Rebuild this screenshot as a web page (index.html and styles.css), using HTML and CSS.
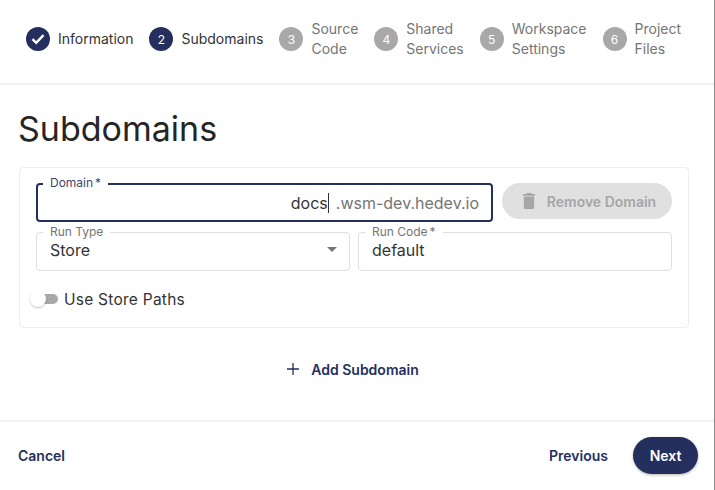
FILE: index.html
```html
<!DOCTYPE html>
<html lang="en">
<head>
  <meta charset="UTF-8">
  <meta name="viewport" content="width=device-width, initial-scale=1.0">
  <title>Subdomains</title>
  <link rel="stylesheet" href="styles.css">
</head>
<body>
  <div class="dialog">
    <!-- Wizard steps -->
    <header class="stepper">
      <div class="step">
        <span class="step-icon active">
          <svg width="14" height="12" viewBox="0 0 14 12"><path d="M1.5 6.2 5.2 9.8 12.500 2.200" fill="none" stroke="#fff" stroke-width="2.400"/></svg>
        </span>
        <span class="step-label done">Information</span>
      </div>
      <div class="step">
        <span class="step-icon active">2</span>
        <span class="step-label done">Subdomains</span>
      </div>
      <div class="step">
        <span class="step-icon">3</span>
        <span class="step-label">Source<br>Code</span>
      </div>
      <div class="step">
        <span class="step-icon">4</span>
        <span class="step-label">Shared<br>Services</span>
      </div>
      <div class="step">
        <span class="step-icon">5</span>
        <span class="step-label">Workspace<br>Settings</span>
      </div>
      <div class="step">
        <span class="step-icon">6</span>
        <span class="step-label">Project<br>Files</span>
      </div>
    </header>

    <main class="content">
      <h1 class="title">Subdomains</h1>

      <section class="card">
        <div class="domain-row">
          <div class="field focused">
            <label class="field-label">Domain<span class="required">*</span></label>
            <span class="domain-value">docs</span>
            <span class="caret"></span>
            <span class="domain-suffix">.wsm-dev.hedev.io</span>
          </div>
          <button class="remove-btn" type="button">
            <svg width="12" height="16" viewBox="0 0 14 18" preserveAspectRatio="none"><path d="M1 16c0 1.100.9 2 2 2h8c1.100 0 2-.9 2-2V4H1v12zM14 1h-3.500l-1-1h-5l-1 1H0v2h14V1z" fill="#a6a6a6"/></svg>
            Remove Domain
          </button>
        </div>

        <div class="run-row">
          <div class="field">
            <label class="field-label">Run Type</label>
            <span class="field-value">Store</span>
            <svg class="select-arrow" width="10" height="5" viewBox="0 0 10 5"><path d="M0 0h10L5 5z" fill="#757575"/></svg>
          </div>
          <div class="field">
            <label class="field-label">Run Code<span class="required">*</span></label>
            <span class="field-value">default</span>
          </div>
        </div>

        <div class="switch-row">
          <span class="switch"><span class="switch-thumb"></span></span>
          <span class="switch-label">Use Store Paths</span>
        </div>
      </section>

      <div class="add-row">
        <button class="text-btn add-btn" type="button">
          <svg width="12" height="12" viewBox="0 0 12 12"><path d="M6 0v12M0 6h12" stroke="#252f5e" stroke-width="1.300" fill="none"/></svg>
          Add Subdomain
        </button>
      </div>
    </main>

    <footer class="actions">
      <button class="text-btn" type="button">Cancel</button>
      <div class="actions-right">
        <button class="text-btn" type="button">Previous</button>
        <button class="next-btn" type="button">Next</button>
      </div>
    </footer>
  </div>
</body>
</html>
```

FILE: styles.css
```css
/* Page */
body {
  margin: 0;
  background: #fff;
  font-family: Inter, "Liberation Sans", sans-serif;
  color: #212121;
}

button {
  font-family: inherit;
  border: none;
  background: none;
  padding: 0;
}

.dialog {
  width: 714px;
  height: 490px;
  border-right: 1px solid #8a8a8a;
  display: flex;
  flex-direction: column;
}

/* Stepper */
.stepper {
  display: flex;
  gap: 16px;
  height: 78px;
  padding: 0 0 5px 26px;
  align-items: center;
  border-bottom: 2px solid #f1f1f1;
}

.step {
  display: flex;
  align-items: center;
  gap: 8px;
}

.step-icon {
  width: 24px;
  height: 24px;
  border-radius: 50%;
  background: #a8a8a8;
  color: #fff;
  font-size: 12px;
  display: flex;
  align-items: center;
  justify-content: center;
}

.step-icon.active {
  background: #252f5e;
}

.step-label {
  font-size: 14px;
  line-height: 20px;
  color: #757575;
}

.step-label.done {
  color: #333;
}

/* Main area */
.content {
  flex: 1;
  padding: 0 25px 0 19px;
}

.title {
  margin: 23px 0 17px -1px;
  font-size: 34px;
  line-height: 42px;
  font-weight: 400;
  color: #252525;
}

.card {
  border: 1px solid #eeeeee;
  border-radius: 4px;
  padding: 15px 16px 0 16px;
  height: 161px;
  box-sizing: border-box;
}

.domain-row {
  display: flex;
  gap: 9px;
  align-items: flex-start;
}

.field {
  position: relative;
  display: flex;
  align-items: center;
  box-sizing: border-box;
  border: 1px solid #e0e0e0;
  border-radius: 4px;
  height: 39px;
  padding: 0 13px 4px;
  font-size: 16px;
}

.field.focused {
  flex: 1;
  border: 2px solid #252f5e;
  justify-content: flex-end;
  padding: 0 12px;
}

/* floats over the field border */
.field-label {
  position: absolute;
  top: -9px;
  left: 6px;
  padding: 0 7px;
  background: #fff;
  font-size: 12px;
  line-height: 15px;
  color: #757575;
}

.focused .field-label {
  left: 5px;
  color: #3e466f;
  top: -10px;
}

.required {
  margin-left: 2px;
}

.domain-value {
  color: #333;
}

.caret {
  width: 1px;
  height: 20px;
  background: #333;
  margin: 0 7px 0 0;
}

.domain-suffix {
  color: #757575;
}

.remove-btn {
  width: 170px;
  height: 36px;
  padding-left: 5px;
  box-sizing: border-box;
  border-radius: 18px;
  background: #e0e0e0;
  color: #a6a6a6;
  font-size: 14px;
  font-weight: 600;
  display: flex;
  align-items: center;
  justify-content: center;
  gap: 12px;
}

.run-row {
  display: grid;
  grid-template-columns: 314px 314px;
  gap: 8px;
  margin-top: 10px;
}

.field-value {
  color: #333;
}

.select-arrow {
  margin-left: auto;
  margin-right: -1px;
}

.switch-row {
  display: flex;
  align-items: center;
  gap: 12px;
  margin-top: 18px;
  height: 20px;
}

.switch {
  position: relative;
  width: 22px;
  height: 10px;
  border-radius: 5px;
  background: #a8a8a8;
}

/* sits over the track */
.switch-thumb {
  position: absolute;
  left: -6px;
  top: -3px;
  width: 16px;
  height: 16px;
  border-radius: 50%;
  background: #fff;
  box-shadow: 0 1px 2px rgba(0, 0, 0, 0.25);
}

.switch-label {
  font-size: 15.500px;
  letter-spacing: 0.25px;
  color: #333;
  margin-left: -6px;
}

.text-btn {
  color: #252f5e;
  font-size: 14px;
  font-weight: 600;
}

.add-row {
  display: flex;
  justify-content: center;
  margin-top: 31px;
  padding-right: 2px;
}

.add-btn {
  display: flex;
  align-items: center;
  gap: 12px;
  height: 20px;
}

/* Footer */
.actions {
  display: flex;
  align-items: center;
  justify-content: space-between;
  height: 66px;
  padding: 0 16px 2px 18px;
  border-top: 2px solid #f1f1f1;
}

.actions-right {
  display: flex;
  align-items: center;
  gap: 25px;
}

.next-btn {
  width: 65px;
  height: 37px;
  border-radius: 19px;
  background: #252f5e;
  color: #fff;
  font-size: 14px;
  font-weight: 600;
  box-shadow: 0 1px 3px rgba(0, 0, 0, 0.3);
}
```
